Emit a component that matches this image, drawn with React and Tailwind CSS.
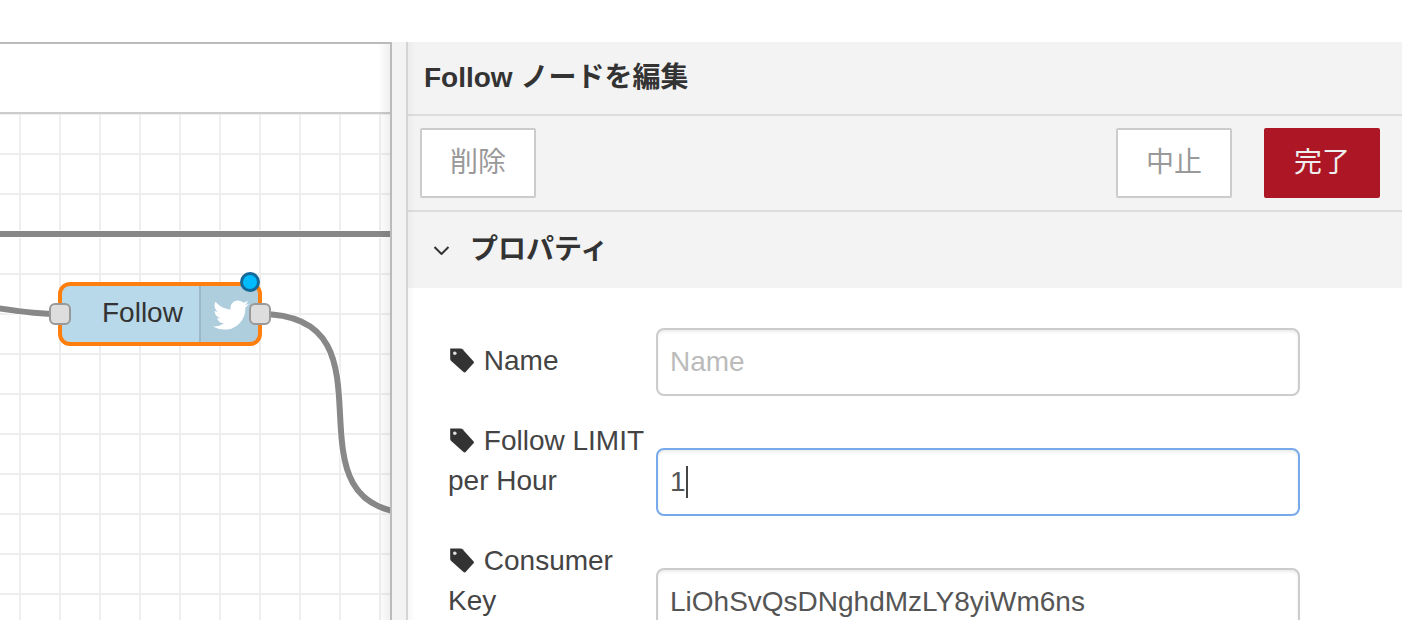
import React from 'react';

const fields = [
  { id: 'name', label: 'Name', placeholder: 'Name', value: '' },
  { id: 'limit', label: 'Follow LIMIT per Hour', value: '1', active: true },
  { id: 'consumer-key', label: 'Consumer Key', value: 'LiOhSvQsDNghdMzLY8yiWm6ns' },
];

const TagIcon = () => (
  <svg viewBox="0 0 28 28" className="inline-block size-7 align-[-4px]" aria-hidden="true">
    <path
      d="M2.200 2.500H12.500Q13.700 2.500 14.500 3.300L25.400 15.200Q26.400 16.300 25.500 17.300L17.600 25.900Q16.600 26.900 15.500 26L3.200 15Q2.200 14 2.200 12.800Z"
      fill="#333"
    />
    <circle cx="6.8" cy="7.2" r="1.8" fill="#ddd" />
  </svg>
);

const BirdIcon = () => (
  <svg viewBox="0 0 512 512" className="size-9 shrink-0 fill-white" aria-hidden="true">
    <path d="M459.370 151.716c.325 4.548.325 9.097.325 13.645 0 138.720-105.583 298.558-298.558 298.558-59.452 0-114.680-17.219-161.137-47.106 8.447.974 16.568 1.299 25.340 1.299 49.055 0 94.213-16.568 130.274-44.832-46.132-.975-84.792-31.188-98.112-72.772 6.498.974 12.995 1.624 19.818 1.624 9.421 0 18.843-1.300 27.614-3.573-48.081-9.747-84.143-51.980-84.143-102.985v-1.299c13.969 7.797 30.214 12.670 47.431 13.319-28.264-18.843-46.781-51.005-46.781-87.391 0-19.492 5.197-37.360 14.294-52.954 51.655 63.675 129.300 105.258 216.365 109.807-1.624-7.797-2.599-15.918-2.599-24.040 0-57.828 46.782-104.934 104.934-104.934 30.213 0 57.502 12.670 76.670 33.137 23.715-4.548 46.456-13.320 66.599-25.340-7.798 24.366-24.366 44.833-46.132 57.827 21.117-2.273 41.584-8.122 60.426-16.243-14.292 20.791-32.161 39.308-52.628 54.253z" />
  </svg>
);

const Wire = ({ d }) => (
  <>
    <path d={d} fill="none" stroke="#fff" strokeWidth="8" />
    <path d={d} fill="none" stroke="#888" strokeWidth="6" />
  </>
);

const Port = ({ className }) => (
  <span
    className={`absolute top-[21px] size-[22px] rounded-md border-2 border-[#999] bg-[#ddd] ${className}`}
  />
);

const FlowNode = () => (
  <div className="absolute left-[58px] top-[168px] w-[204px] h-16">
    <div className="flex h-full overflow-hidden rounded-xl border-4 border-[#ff7f0e] bg-[#b8d9e9]">
      <span className="flex flex-1 items-center pl-10 pb-0.5 text-[#333]">Follow</span>
      <span className="flex w-[59px] items-center border-l-2 border-black/10 bg-black/5 pl-3 pt-0.5">
        <BirdIcon />
      </span>
    </div>
    <Port className="left-[-9px]" />
    <Port className="right-[-9px]" />
    <span className="absolute right-[2px] top-[-10px] size-5 rounded-full border-3 border-[#14699a] bg-[#00bcff]" />
  </div>
);

const Workspace = () => (
  <section className="relative flex w-[392px] shrink-0 flex-col border-t-2 border-r-2 border-[#bbb]">
    <div className="h-[70px] shrink-0 border-b-2 border-[#ccc]" />
    <div className="relative min-h-0 flex-1 overflow-hidden">
      <svg className="absolute inset-0 h-full w-full" aria-hidden="true">
        <defs>
          <pattern id="grid" x="0" y="-20" width="40" height="40" patternUnits="userSpaceOnUse">
            <path d="M0 20H40M20 0V40" stroke="#eee" strokeWidth="2" />
          </pattern>
        </defs>
        <rect width="100%" height="100%" fill="url(#grid)" />
        <Wire d="M-10 120H400" />
        <Wire d="M-6 193.500C16 197 38 200 60 200" />
        <Wire d="M260 200C410 200 270 400 420 400" />
      </svg>
      <FlowNode />
    </div>
    <div className="absolute inset-y-0 right-0 w-3 bg-linear-to-l from-black/6 to-transparent" />
  </section>
);

const trayButton = 'h-[70px] rounded-xs border-2 px-7';

const Field = ({ id, label, placeholder, value, active }) => (
  <div className="flex items-end">
    <label htmlFor={id} className="w-[208px] shrink-0 pb-[15px] text-[#444]">
      <TagIcon /> {label}
    </label>
    <div className="relative w-[70%]">
      <input
        id={id}
        type="text"
        defaultValue={value}
        placeholder={placeholder}
        className={`block h-[68px] w-full rounded-lg border-2 bg-white px-3 text-[#555] shadow-[inset_0_2px_3px_rgba(0,0,0,0.08)] outline-none placeholder:text-[#bbb] ${
          active ? 'border-[#78aaeb]' : 'border-[#ccc]'
        }`}
      />
      {active && <span className="absolute left-[30px] top-[18px] h-8 w-0.5 bg-[#444]" />}
    </div>
  </div>
);

const EditTray = () => (
  <section className="relative flex min-w-0 flex-1 flex-col border-l-2 border-[#d4d4d4] bg-white">
    <h1 className="flex h-[74px] shrink-0 items-center border-b-2 border-[#ddd] bg-[#f3f3f3] px-4 font-bold">
      Follow ノードを編集
    </h1>
    <div className="flex shrink-0 items-center border-b-2 border-[#ddd] bg-[#f3f3f3] py-3 pl-3 pr-[22px]">
      <button type="button" className={`${trayButton} border-[#ccc] bg-white text-[#999]`}>
        削除
      </button>
      <div className="ml-auto flex gap-8">
        <button type="button" className={`${trayButton} border-[#ccc] bg-white text-[#999]`}>
          中止
        </button>
        <button type="button" className={`${trayButton} border-[#ad1625] bg-[#ad1625] text-[#eee]`}>
          完了
        </button>
      </div>
    </div>
    <button
      type="button"
      className="flex h-[76px] shrink-0 items-center gap-5 bg-[#f3f3f3] pl-[26px] font-bold"
    >
      <svg viewBox="0 0 16 10" className="h-[10px] w-4" aria-hidden="true">
        <path d="M0.500 2L7.500 9L14.500 2" fill="none" stroke="#333" strokeWidth="2" />
      </svg>
      プロパティ
    </button>
    <form className="flex flex-col gap-[25px] pt-10 pl-10 pr-[34px]">
      {fields.map((field) => (
        <Field key={field.id} {...field} />
      ))}
    </form>
    <div className="absolute inset-y-0 left-0 w-2 bg-linear-to-r from-black/3 to-transparent" />
  </section>
);

const App = () => {
  return (
    <div className="flex h-screen flex-col overflow-hidden bg-white font-['Liberation_Sans','Noto_Sans_CJK_JP',sans-serif] text-[28px] leading-10 text-[#333]">
      <header className="h-[42px] shrink-0" />
      <main className="flex min-h-0 flex-1">
        <Workspace />
        <div className="w-[14px] shrink-0 bg-[#f3f3f3]" />
        <EditTray />
      </main>
    </div>
  );
};

export default App;
